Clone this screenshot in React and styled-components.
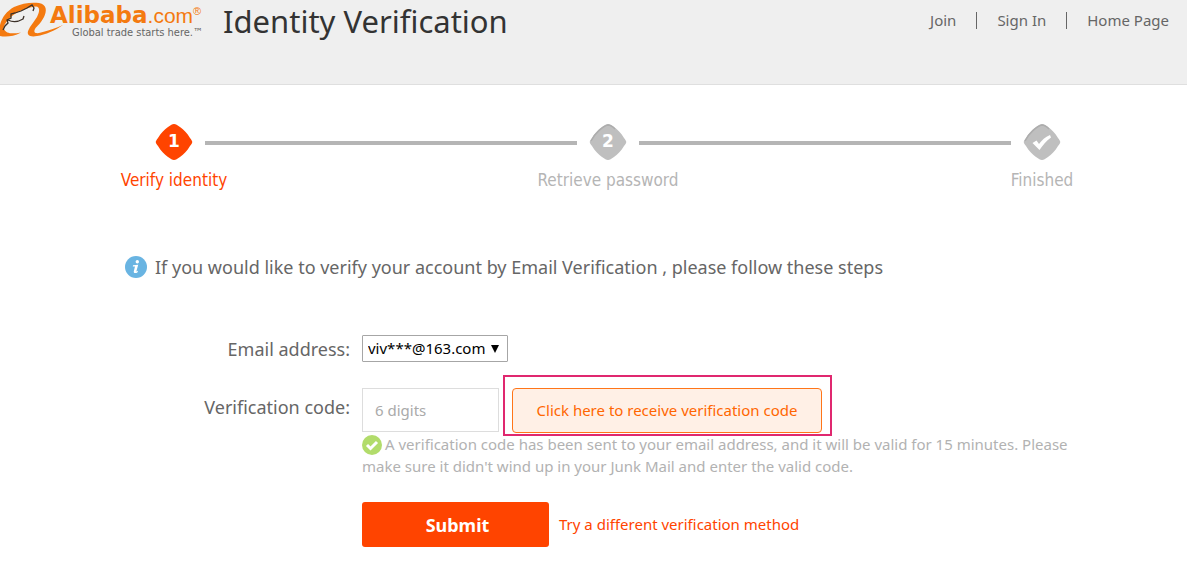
import React from "react";
import styled, { createGlobalStyle } from "styled-components";

const steps = [
  { mark: "1", label: "Verify identity", active: true },
  { mark: "2", label: "Retrieve password" },
  { mark: "check", label: "Finished" },
];

function Logo() {
  return (
    <LogoStyled href="#home">
      <svg width="66" height="38" viewBox="0 0 66 38" aria-hidden="true">
        <path
          d="M0 25 C2 17 7 11 14 7 C22 3 32 2 39 3 C47 4.500 47 11 44 17 C41 23 37 26 35 29 C33 33 36 34 41 32.500 C48 31 56 28 63 25 C56 30 45 35 37 36 C30 37.500 26 35 28.500 30 C30 26 34 22 37 17 C40 11 40 7 36 6.500 C29 7 18 11 12 16 C7 20 3 26 4 29 C6 34 13 34 21 32.500 C13 37 5 37 0 36 Z"
          fill="#f47a10"
        />
        <path
          d="M3 30 L5 26 L8 23 L7 20 L11 18 L11 14 L15 13 L21 11 L27 8 L32 5 L34 8 L33 11 M8 20 C12 22 18 22 23 19 L24 16"
          fill="none"
          stroke="#3b3028"
          strokeWidth="1.300"
        />
      </svg>
      <span className="wordmark">
        <span className="name">
          <b>Alibaba</b>.com<sup>®</sup>
        </span>
        <span className="tagline">Global trade starts here.™</span>
      </span>
    </LogoStyled>
  );
}

function StepIcon({ mark, active }) {
  return (
    <svg width="38" height="38" viewBox="0 0 38 38" aria-hidden="true">
      <path
        d="M19 1 C21 1 22 2 25 4 C29 7 32 10 35 15 C38 19 38 19 35 23 C32 28 29 31 25 34 C22 36 21 37 19 37 C17 37 16 36 13 34 C9 31 6 28 3 23 C0 19 0 19 3 15 C6 10 9 7 13 4 C16 2 17 1 19 1 Z"
        fill={active ? "#ff4400" : "#bfbfbf"}
      />
      {!active && (
        <path
          d="M2 18 C6 10 14 3 19 2 C22 2 24 4 26 6"
          fill="none"
          stroke="#adadad"
          strokeWidth="1.5"
        />
      )}
      {mark === "check" ? (
        <path
          d="M9.500 20 L13.500 17.500 L16 21 C19 17 22 14 27 12 L28 14.500 C23 18 20 22 16.500 27 Z"
          fill="#fff"
        />
      ) : (
        <text x="19" y="24" textAnchor="middle">
          {mark}
        </text>
      )}
    </svg>
  );
}

function Stepper() {
  return (
    <StepperStyled>
      {steps.map((step, i) => (
        <React.Fragment key={step.label}>
          {i > 0 && <StepLine />}
          <Step $active={step.active}>
            <StepIcon mark={step.mark} active={step.active} />
            <span>{step.label}</span>
          </Step>
        </React.Fragment>
      ))}
    </StepperStyled>
  );
}

function App() {
  return (
    <>
      <GlobalStyle />
      <Header>
        <Logo />
        <h1>Identity Verification</h1>
        <Nav>
          <a href="#join">Join</a>
          <a href="#signin">Sign In</a>
          <a href="#home">Home Page</a>
        </Nav>
      </Header>
      <main>
        <Stepper />
        <Notice>
          <svg width="22" height="22" viewBox="0 0 22 22" aria-hidden="true">
            <circle cx="11" cy="11" r="11" fill="#69b4e2" />
            <circle cx="12.300" cy="5.800" r="1.700" fill="#fff" />
            <path
              d="M8 9.200 L13.200 8.800 L11.300 15.400 L13 14.800 L12.600 16.200 C11 17.400 8.300 17.600 8.800 15.200 L10 10.600 L7.800 10.400 Z"
              fill="#fff"
            />
          </svg>
          <p>
            If you would like to verify your account by Email Verification ,
            please follow these steps
          </p>
        </Notice>
        <Form onSubmit={(e) => e.preventDefault()}>
          <Label htmlFor="email">Email address:</Label>
          <SelectBox>
            <select id="email">
              <option>viv***@163.com</option>
            </select>
            <svg width="8" height="8" viewBox="0 0 8 8" aria-hidden="true">
              <path d="M0 0 H8 L4 8 Z" fill="#000" />
            </svg>
          </SelectBox>
          <Label htmlFor="code" $tall>
            Verification code:
          </Label>
          <Field>
            <div className="row">
              <CodeInput id="code" type="text" placeholder="6 digits" />
              <Highlight>
                <CodeButton type="button">
                  Click here to receive verification code
                </CodeButton>
              </Highlight>
            </div>
            <Hint>
              <svg width="20" height="20" viewBox="0 0 20 20" aria-hidden="true">
                <circle cx="10" cy="10" r="10" fill="#b2dc6b" />
                <path
                  d="M5 10 L8.500 13.500 L15 7"
                  fill="none"
                  stroke="#fff"
                  strokeWidth="3"
                />
              </svg>
              A verification code has been sent to your email address, and it
              will be valid for 15 minutes. Please make sure it didn't wind up
              in your Junk Mail and enter the valid code.
            </Hint>
          </Field>
          <Actions>
            <SubmitButton type="submit">Submit</SubmitButton>
            <a href="#method">Try a different verification method</a>
          </Actions>
        </Form>
      </main>
    </>
  );
}

const GlobalStyle = createGlobalStyle`
  * {
    box-sizing: border-box;
    margin: 0;
    padding: 0;
  }
  body {
    background: #fff;
    color: #666;
    font-family: "Noto Sans", sans-serif;
    font-size: 15px;
  }
  a {
    color: inherit;
    text-decoration: none;
  }
  button, input, select {
    font-family: inherit;
    font-size: 15px;
  }
`;

const Header = styled.header`
  display: flex;
  align-items: flex-start;
  height: 85px;
  padding-right: 18px;
  background: #efefef;
  border-bottom: 1px solid #dfdfdf;
  h1 {
    margin-left: 18px;
    color: #333;
    font-size: 31px;
    font-weight: 400;
    line-height: 42px;
    white-space: nowrap;
  }
`;

const LogoStyled = styled.a`
  display: flex;
  width: 205px;
  svg {
    flex: none;
  }
  .wordmark {
    display: flex;
    flex-direction: column;
    margin-left: -16px;
    padding-top: 4px;
    white-space: nowrap;
  }
  .name {
    color: #f47a10;
    font-family: "Liberation Sans", sans-serif;
    font-size: 21px;
    line-height: 23px;
  }
  .name b {
    font-family: "DejaVu Sans", sans-serif;
    font-size: 23px;
  }
  sup {
    font-size: 11px;
    line-height: 1px;
    vertical-align: 8px;
  }
  .tagline {
    padding-left: 22px;
    color: #666;
    font-family: "DejaVu Sans Condensed", "DejaVu Sans", sans-serif;
    font-size: 11px;
    line-height: 12px;
  }
`;

const Nav = styled.nav`
  display: flex;
  margin-left: auto;
  padding-top: 12px;
  a {
    line-height: 17px;
    white-space: nowrap;
  }
  a + a {
    margin-left: 20px;
    padding-left: 20px;
    border-left: 1px solid #666;
  }
`;

const StepperStyled = styled.div`
  display: flex;
  gap: 12px;
  padding: 38px 126px 0 155px;
`;

const Step = styled.div`
  display: flex;
  flex-direction: column;
  align-items: center;
  width: 38px;
  color: ${(props) => (props.$active ? "#ff4400" : "#b5b5b5")};
  font-family: "DejaVu Sans Condensed", "DejaVu Sans", sans-serif;
  font-size: 17px;
  line-height: 24px;
  white-space: nowrap;
  svg {
    flex: none;
    margin-bottom: 7px;
  }
  text {
    fill: #fff;
    font: bold 17px "DejaVu Sans", sans-serif;
  }
`;

const StepLine = styled.div`
  flex: 1;
  height: 4px;
  margin-top: 18px;
  background: #b5b5b5;
`;

const Notice = styled.div`
  display: flex;
  align-items: center;
  gap: 8px;
  margin-top: 63px;
  padding-left: 125px;
  font-size: 18px;
  line-height: 24px;
`;

const Form = styled.form`
  display: grid;
  grid-template-columns: 350px 1fr;
  column-gap: 12px;
  margin-top: 56px;
  padding-right: 80px;
`;

const Label = styled.label`
  padding-top: ${(props) => (props.$tall ? "7px" : "2px")};
  font-size: 18px;
  line-height: 24px;
  text-align: right;
`;

const SelectBox = styled.div`
  position: relative;
  justify-self: start;
  width: 146px;
  margin-bottom: 26px;
  select {
    display: block;
    width: 100%;
    height: 27px;
    padding: 0 5px 2px;
    appearance: none;
    border: 1px solid #a6a6a6;
    border-radius: 1px;
    background: #fff;
    color: #000;
  }
  svg {
    position: absolute;
    top: 10px;
    right: 9px;
    pointer-events: none;
  }
`;

const Field = styled.div`
  .row {
    display: flex;
    align-items: flex-start;
    gap: 13px;
  }
`;

const CodeInput = styled.input`
  width: 137px;
  height: 44px;
  padding: 0 12px;
  border: 1px solid #ddd;
  &::placeholder {
    color: #aaa;
    opacity: 1;
  }
`;

const Highlight = styled.div`
  position: relative;
  &::after {
    content: "";
    position: absolute;
    inset: -13px -10px -3px -9px;
    border: 2px solid #e0286f;
    pointer-events: none;
  }
`;

const CodeButton = styled.button`
  display: block;
  width: 310px;
  height: 45px;
  padding-bottom: 2px;
  border: 1px solid #ff7519;
  border-radius: 4px;
  background: #fff0e6;
  color: #ff6600;
`;

const Hint = styled.p`
  max-width: 740px;
  color: #b2b2b2;
  line-height: 22px;
  svg {
    margin-right: 3px;
    vertical-align: -5px;
  }
`;

const Actions = styled.div`
  grid-column: 2;
  display: flex;
  align-items: center;
  gap: 10px;
  margin-top: 25px;
  color: #ff4400;
  a {
    padding-bottom: 2px;
  }
`;

const SubmitButton = styled.button`
  width: 187px;
  height: 45px;
  padding-left: 4px;
  border: 0;
  border-radius: 3px;
  background: #ff4400;
  color: #fff;
  font-size: 18px;
  font-weight: 700;
`;

export default App;
